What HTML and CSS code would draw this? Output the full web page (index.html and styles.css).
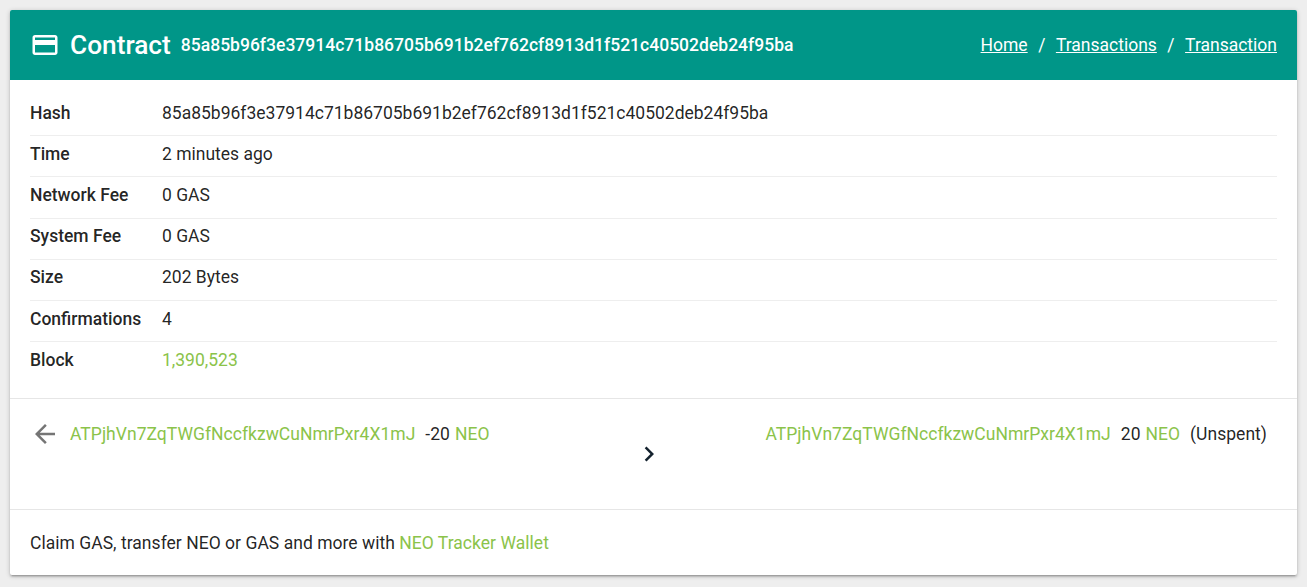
FILE: index.html
```html
<!DOCTYPE html>
<html lang="en">
<head>
<meta charset="utf-8">
<title>Contract</title>
<link rel="stylesheet" href="styles.css">
</head>
<body>
<main class="card">
  <header class="head">
    <div class="head-left">
      <svg class="card-icon" viewBox="0 0 24 24" width="30" height="30" aria-hidden="true"><path fill="#fff" d="M20 4H4c-1.11 0-1.99.89-1.99 2L2 18c0 1.11.89 2 2 2h16c1.11 0 2-.89 2-2V6c0-1.11-.89-2-2-2zm0 14H4v-6h16v6zm0-10H4V6h16v2z"/></svg>
      <h1 class="title">Contract</h1>
      <span class="head-hash">85a85b96f3e37914c71b86705b691b2ef762cf8913d1f521c40502deb24f95ba</span>
    </div>
    <nav class="crumbs">
      <a href="#">Home</a><span class="sep">/</span><a href="#">Transactions</a><span class="sep">/</span><a href="#">Transaction</a>
    </nav>
  </header>

  <section class="details">
    <div class="row"><span class="label">Hash</span><span>85a85b96f3e37914c71b86705b691b2ef762cf8913d1f521c40502deb24f95ba</span></div>
    <div class="row"><span class="label">Time</span><span>2 minutes ago</span></div>
    <div class="row"><span class="label">Network Fee</span><span>0 GAS</span></div>
    <div class="row"><span class="label">System Fee</span><span>0 GAS</span></div>
    <div class="row"><span class="label">Size</span><span>202 Bytes</span></div>
    <div class="row"><span class="label">Confirmations</span><span>4</span></div>
    <div class="row"><span class="label">Block</span><a class="link" href="#">1,390,523</a></div>
  </section>

  <section class="transfer">
    <div class="side">
      <svg class="back" viewBox="0 0 24 24" width="30" height="30" aria-hidden="true"><path fill="#757575" d="M20 11H7.83l5.59-5.59L12 4l-8 8 8 8 1.41-1.41L7.83 13H20v-2z"/></svg>
      <a class="link" href="#">ATPjhVn7ZqTWGfNccfkzwCuNmrPxr4X1mJ</a>
      <span class="amount">-20</span>
      <a class="link asset" href="#">NEO</a>
    </div>
    <svg class="chev" viewBox="0 0 24 24" width="30" height="30" aria-hidden="true"><path fill="#14222e" d="M10 6L8.59 7.41 13.17 12l-4.58 4.59L10 18l6-6z"/></svg>
    <div class="side side-right">
      <a class="link" href="#">ATPjhVn7ZqTWGfNccfkzwCuNmrPxr4X1mJ</a>
      <span class="amount">20</span>
      <a class="link asset" href="#">NEO</a>
      <span class="status">(Unspent)</span>
    </div>
  </section>

  <footer class="foot">Claim GAS, transfer NEO or GAS and more with&nbsp;<a class="link" href="#">NEO Tracker Wallet</a></footer>
</main>
</body>
</html>
```
FILE: styles.css
```css
* { box-sizing: border-box; }
html, body { height: 100%; }
body {
  margin: 0;
  padding: 10px;
  background: #eeeeee;
  font-family: Roboto, "Liberation Sans", sans-serif;
  font-size: 17.5px;
  line-height: 24px;
  color: rgba(0, 0, 0, 0.87);
  overflow: hidden;
}
.card {
  height: 565px;
  display: flex;
  flex-direction: column;
  background: #fff;
  border-radius: 2px;
  overflow: hidden;
  box-shadow: 0 1px 5px rgba(0,0,0,.2), 0 2px 2px rgba(0,0,0,.14), 0 3px 1px -2px rgba(0,0,0,.12);
}
.head {
  height: 70px;
  flex: none;
  display: flex;
  align-items: center;
  justify-content: space-between;
  padding: 0 20px;
  background: #009688;
  color: #fff;
}
.head-left { display: flex; align-items: center; }
.card-icon { margin-right: 10px; display: block; }
.title { margin: 0 10px 0 0; font-size: 26.25px; line-height: 32px; font-weight: 500; }
.head-hash { font-weight: 500; letter-spacing: .015px; }
.crumbs { display: flex; align-items: center; }
.crumbs a { color: #fff; text-decoration: underline; }
.sep { margin: 0 10.5px; }
.details { padding: 15px 20px 14.6px; flex: none; }
.row {
  display: flex;
  align-items: center;
  height: 41.2px;
  padding-bottom: 4.8px;
  border-bottom: 1px solid #eeeeee;
}
.row:last-child { border-bottom: 0; }
.label { width: 132px; flex: none; font-weight: 500; }
.link { color: #8bc34a; text-decoration: none; }
.transfer {
  flex: none;
  height: 111px;
  display: flex;
  justify-content: space-between;
  padding: 0 30px 0 20px;
  position: relative;
  border-top: 1px solid #e6e6e6;
  letter-spacing: .03px;
}
.side { display: flex; align-items: center; height: 24px; margin-top: 23px; }
.back { margin-right: 10px; flex: none; }
.amount { margin-left: 10px; }
.asset { margin-left: 5px; }
.status { margin-left: 10px; }
.chev { position: absolute; left: 624px; top: 40px; }
.foot {
  flex: 1;
  display: flex;
  align-items: center;
  padding: 2px 20px 0;
  border-top: 1px solid #e6e6e6;
  letter-spacing: .03px;
}
```
